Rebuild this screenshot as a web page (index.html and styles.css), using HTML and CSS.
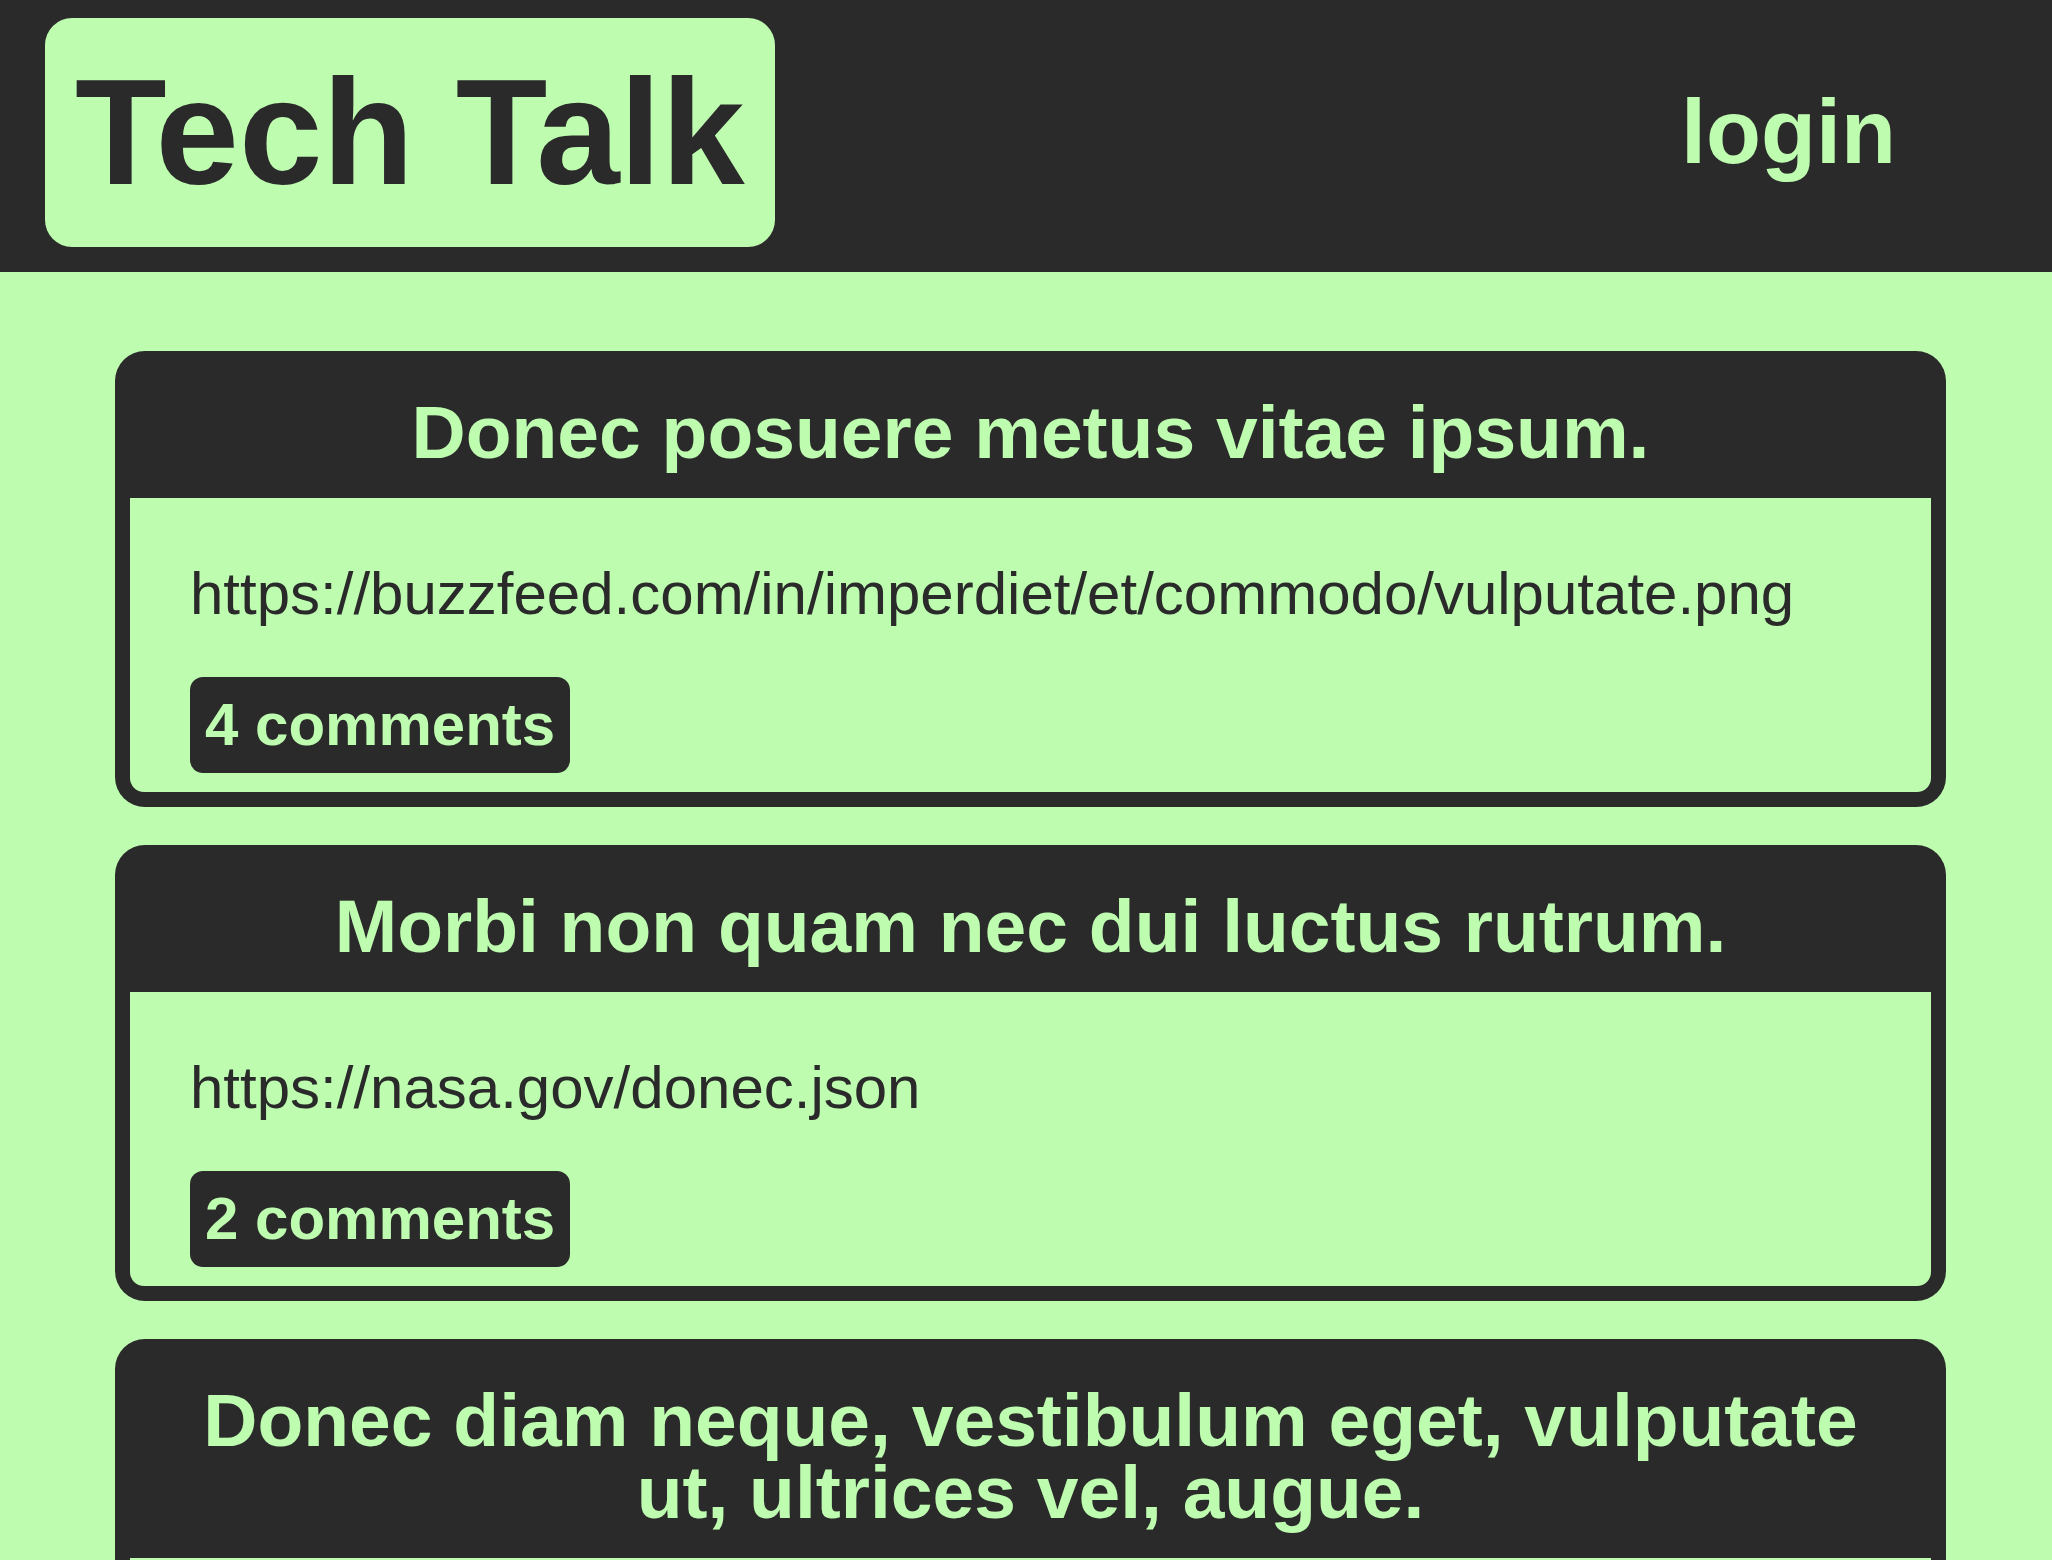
FILE: index.html
```html
<!DOCTYPE html>
<html lang="en">
<head>
<meta charset="utf-8">
<title>Tech Talk</title>
<link rel="stylesheet" href="styles.css">
</head>
<body>
<header class="topbar">
  <a class="logo" href="#">Tech Talk</a>
  <a class="login" href="#">login</a>
</header>
<main class="feed">
  <article class="post">
    <h2 class="post-title">Donec posuere metus vitae ipsum.</h2>
    <div class="post-body">
      <p class="post-url">https://buzzfeed.com/in/imperdiet/et/commodo/vulputate.png</p>
      <a class="comments" href="#">4 comments</a>
    </div>
  </article>
  <article class="post">
    <h2 class="post-title">Morbi non quam nec dui luctus rutrum.</h2>
    <div class="post-body">
      <p class="post-url">https://nasa.gov/donec.json</p>
      <a class="comments" href="#">2 comments</a>
    </div>
  </article>
  <article class="post">
    <h2 class="post-title">Donec diam neque, vestibulum eget, vulputate ut, ultrices vel, augue.</h2>
    <div class="post-body post-body-empty"></div>
  </article>
</main>
</body>
</html>
```
FILE: styles.css
```css
html, body {
  margin: 0;
  padding: 0;
}
body {
  background: #befcb0;
  color: #2a2a2a;
  font-family: "Liberation Sans", Arial, sans-serif;
  font-size: 60px;
  line-height: 72px;
}
a {
  text-decoration: none;
  color: inherit;
}
.topbar {
  background: #2a2a2a;
  height: 272px;
  box-sizing: border-box;
  padding: 18px 156px 26px 45px;
  display: flex;
  align-items: center;
  justify-content: space-between;
}
.logo {
  background: #befcb0;
  color: #2a2a2a;
  font-weight: bold;
  font-size: 150px;
  line-height: normal;
  padding: 28px 30px;
  border-radius: 27px;
}
.login {
  color: #befcb0;
  font-weight: bold;
  font-size: 90px;
  line-height: normal;
}
.feed {
  padding: 79px 106px 0 115px;
  display: flex;
  flex-direction: column;
  gap: 38px;
}
.post {
  background: #2a2a2a;
  border-radius: 30px;
  padding: 0 15px 15px;
}
.post-title {
  margin: 0;
  padding: 45px 20px 30px;
  text-align: center;
  color: #befcb0;
  font-size: 75px;
  line-height: 72px;
  font-weight: bold;
}
.post-body {
  background: #befcb0;
  border-radius: 0 0 14px 14px;
  padding: 60px 60px 19px;
}
.post-body-empty {
  min-height: 230px;
}
.post-url {
  margin: 0 0 47px;
}
.comments {
  display: inline-block;
  background: #2a2a2a;
  color: #befcb0;
  font-weight: bold;
  padding: 12px 15px;
  border-radius: 13px;
}
```
